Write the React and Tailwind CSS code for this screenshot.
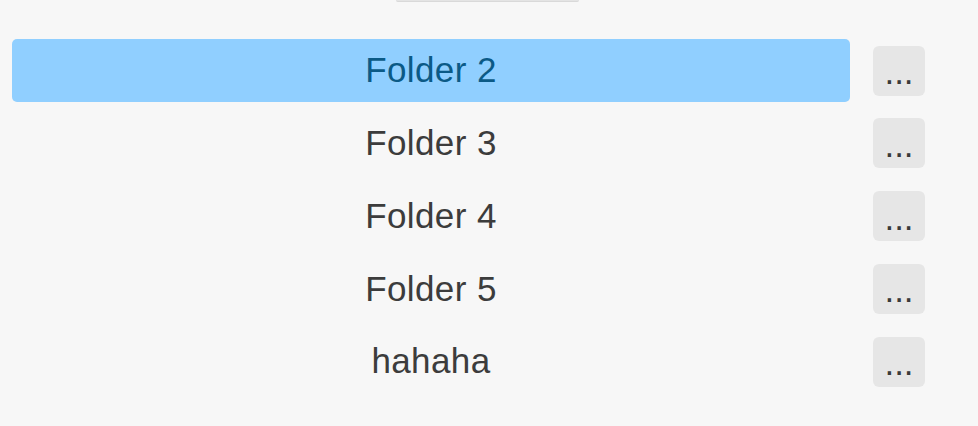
const folders = [
  { name: 'Folder 2', selected: true },
  { name: 'Folder 3' },
  { name: 'Folder 4' },
  { name: 'Folder 5' },
  { name: 'hahaha' },
];

export default function App() {
  return (
    <div className="min-h-screen w-full bg-[#f7f7f7] font-['Liberation_Sans',Arial,sans-serif] overflow-hidden">
      {/* button cut off at the top */}
      <div className="ml-[396px] h-[2px] w-[183px] rounded-b-[4px] bg-[#e4e4e4] border-b border-[#d9d9d9]" />

      <div className="mt-[37px] flex flex-col gap-[9.75px]">
        {folders.map((f) => (
          <div key={f.name} className="flex items-center pl-[12px]">
            <div
              className={`flex h-[63px] w-[838px] items-center justify-center rounded-[5px] text-[35px] tracking-[0.4px] ${
                f.selected ? 'bg-[#90cfff] text-[#0b5a86]' : 'text-[#3c3c3c]'
              }`}
            >
              {f.name}
            </div>
            <button className="ml-[23px] flex h-[50px] w-[52px] items-center justify-center rounded-[6px] bg-[#e6e6e6] pt-[2px] text-[35px] leading-none text-[#3a3a3a]">
              ...
            </button>
          </div>
        ))}
      </div>
    </div>
  );
}
